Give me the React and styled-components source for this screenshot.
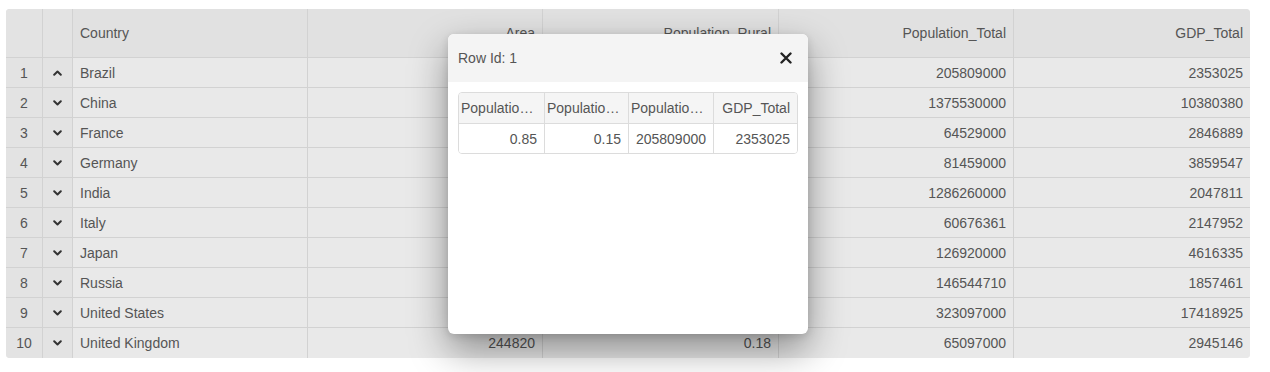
import React from "react";
import styled, { createGlobalStyle } from "styled-components";

const GlobalStyle = createGlobalStyle`
  body {
    margin: 0;
    background: #ffffff;
    font-family: "Liberation Sans", Arial, sans-serif;
  }
`;

const Page = styled.div`
  position: relative;
  padding: 9px 20px 15px 6px;
`;

const Grid = styled.div`
  width: 1244px;
  border-radius: 4px;
  overflow: hidden;
  background: #e9e9e9;
  font-size: 14px;
  color: #555;
`;

const Row = styled.div`
  display: grid;
  grid-template-columns: 37px 30px 235px 235px 236px 235px 236px;
  height: ${props => (props.head ? "49px" : "30px")};
  background: ${props => (props.head ? "#e1e1e1" : "#e9e9e9")};
  border-bottom: 1px solid #d2d2d2;
  box-sizing: border-box;

  &:last-child {
    border-bottom: none;
  }
`;

const Cell = styled.div`
  display: flex;
  align-items: center;
  justify-content: ${props =>
    props.align === "right" ? "flex-end" : props.align === "center" ? "center" : "flex-start"};
  padding: 0 7px;
  border-right: 1px solid #d2d2d2;
  background: ${props => (props.side ? "#e3e3e3" : "transparent")};
  white-space: nowrap;
  overflow: hidden;

  &:last-child {
    border-right: none;
  }
`;

const Chevron = ({ up }) => (
  <svg width="9" height="6" viewBox="0 0 9 6">
    <path
      d={up ? "M1.2 4.8 L4.5 1.5 L7.8 4.8" : "M1.2 1.2 L4.5 4.5 L7.8 1.2"}
      fill="none"
      stroke="#333"
      strokeWidth="2"
      strokeLinecap="round"
      strokeLinejoin="round"
    />
  </svg>
);

const Modal = styled.div`
  position: absolute;
  left: 448px;
  top: 34px;
  width: 360px;
  height: 300px;
  background: #fff;
  border-radius: 6px;
  box-shadow: 0 16px 38px rgba(0, 0, 0, 0.4), 0 2px 8px rgba(0, 0, 0, 0.12);
  overflow: hidden;
  display: flex;
  flex-direction: column;
`;

const ModalHead = styled.div`
  height: 48px;
  background: #f4f4f4;
  display: flex;
  align-items: center;
  justify-content: space-between;
  padding: 0 16px 0 10px;
  font-size: 14px;
  color: #555;
`;

const Close = styled.button`
  border: none;
  background: none;
  padding: 0;
  display: flex;
  cursor: pointer;
`;

const ModalBody = styled.div`
  padding: 10px;
`;

const Mini = styled.div`
  border: 1px solid #dcdcdc;
  border-radius: 4px;
  overflow: hidden;
  font-size: 14px;
  color: #555;
`;

const MiniRow = styled.div`
  display: grid;
  grid-template-columns: 86px 84px 85px 1fr;
  height: 30px;
  background: ${props => (props.head ? "#f5f5f5" : "#fff")};
  border-bottom: 1px solid #dcdcdc;

  &:last-child {
    border-bottom: none;
    height: 29px;
  }
`;

const MiniCell = styled.div`
  display: flex;
  align-items: center;
  justify-content: ${props => (props.left ? "flex-start" : "flex-end")};
  padding: ${props => (props.left ? "0 5px 0 2px" : "0 7px")};
  border-right: 1px solid #dcdcdc;
  white-space: nowrap;
  overflow: hidden;
  min-width: 0;

  &:last-child {
    border-right: none;
  }
`;

const Ellip = styled.span`
  overflow: hidden;
  text-overflow: ellipsis;
  white-space: nowrap;
`;

const rows = [
  ["Brazil", "", "", "205809000", "2353025"],
  ["China", "", "", "1375530000", "10380380"],
  ["France", "", "", "64529000", "2846889"],
  ["Germany", "", "", "81459000", "3859547"],
  ["India", "", "", "1286260000", "2047811"],
  ["Italy", "", "", "60676361", "2147952"],
  ["Japan", "", "", "126920000", "4616335"],
  ["Russia", "", "", "146544710", "1857461"],
  ["United States", "", "", "323097000", "17418925"],
  ["United Kingdom", "244820", "0.18", "65097000", "2945146"],
];

export default function App() {
  return (
    <>
      <GlobalStyle />
      <Page>
        <Grid>
          <Row head>
            <Cell side />
            <Cell side />
            <Cell>Country</Cell>
            <Cell align="right">Area</Cell>
            <Cell align="right">Population_Rural</Cell>
            <Cell align="right">Population_Total</Cell>
            <Cell align="right">GDP_Total</Cell>
          </Row>
          {rows.map((r, i) => (
            <Row key={r[0]}>
              <Cell side align="center">{i + 1}</Cell>
              <Cell side align="center">
                <Chevron up={i === 0} />
              </Cell>
              <Cell>{r[0]}</Cell>
              <Cell align="right">{r[1]}</Cell>
              <Cell align="right">{r[2]}</Cell>
              <Cell align="right">{r[3]}</Cell>
              <Cell align="right">{r[4]}</Cell>
            </Row>
          ))}
        </Grid>

        <Modal>
          <ModalHead>
            <span>Row Id: 1</span>
            <Close aria-label="close">
              <svg width="12" height="12" viewBox="0 0 12 12">
                <path d="M1.5 1.5 L10.5 10.5 M10.5 1.5 L1.5 10.5" stroke="#222" strokeWidth="2.4" strokeLinecap="round" />
              </svg>
            </Close>
          </ModalHead>
          <ModalBody>
            <Mini>
              <MiniRow head>
                <MiniCell left><Ellip>Population_Urban</Ellip></MiniCell>
                <MiniCell left><Ellip>Population_Rural</Ellip></MiniCell>
                <MiniCell left><Ellip>Population_Total</Ellip></MiniCell>
                <MiniCell>GDP_Total</MiniCell>
              </MiniRow>
              <MiniRow>
                <MiniCell>0.85</MiniCell>
                <MiniCell>0.15</MiniCell>
                <MiniCell>205809000</MiniCell>
                <MiniCell>2353025</MiniCell>
              </MiniRow>
            </Mini>
          </ModalBody>
        </Modal>
      </Page>
    </>
  );
}
